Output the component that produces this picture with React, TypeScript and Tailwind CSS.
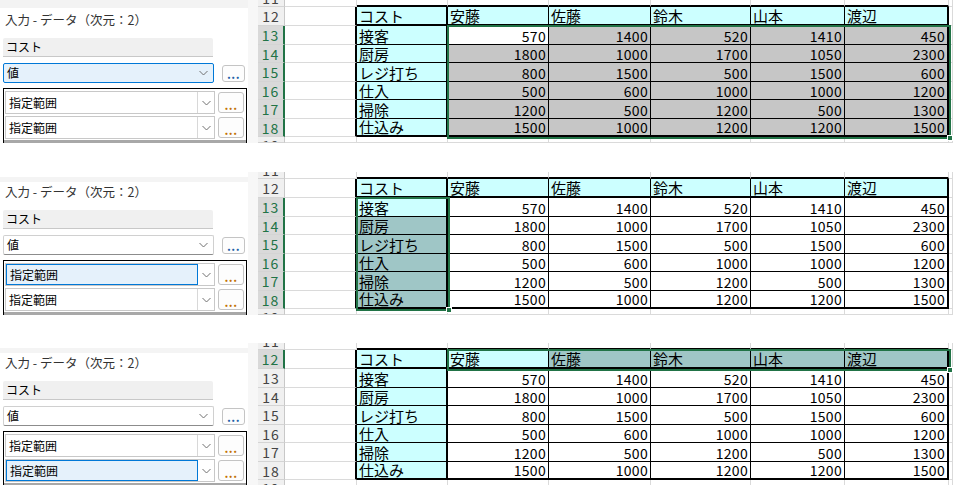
import React from "react";

const FONT = { fontFamily: '"Noto Sans CJK JP", "Noto Sans", sans-serif' };

const COLW = [72, 91, 101, 102, 100, 94, 104, 4];
const ROWS = [11, 12, 13, 14, 15, 16, 17, 18, 19];
const ROWH: Record<number, number> = { 11: 7, 12: 19, 13: 19, 14: 18, 15: 19, 16: 18, 17: 19, 18: 18, 19: 6 };

const HEADER = ["コスト", "安藤", "佐藤", "鈴木", "山本", "渡辺"];
const DATA: (string | number)[][] = [
  ["接客", 570, 1400, 520, 1410, 450],
  ["厨房", 1800, 1000, 1700, 1050, 2300],
  ["レジ打ち", 800, 1500, 500, 1500, 600],
  ["仕入", 500, 600, 1000, 1000, 1200],
  ["掃除", 1200, 500, 1200, 500, 1300],
  ["仕込み", 1500, 1000, 1200, 1200, 1500],
];

type Sel = { c0: number; c1: number; r0: number; r1: number; ac: number; ar: number };
type PanelCfg = { sel: Sel; valueFocus: boolean; boxHi: number; firstPanel: boolean };

const GRID = "#dadada";

function colLeft(c: number) {
  let x = 0;
  for (let i = 0; i < c; i++) x += COLW[i];
  return x;
}
function rowTop(r: number) {
  let y = 0;
  for (const rr of ROWS) {
    if (rr === r) break;
    y += ROWH[rr];
  }
  return y;
}

function Chevron() {
  return (
    <svg width="9" height="6" viewBox="0 0 9 6" className="shrink-0">
      <polyline points="0.5,1 4.5,5 8.5,1" fill="none" stroke="#707070" strokeWidth="1" />
    </svg>
  );
}

function DotsButton({ color, className }: { color: string; className: string }) {
  return (
    <div
      className={"flex items-end justify-center rounded-[3px] border border-[#c4c4c4] bg-[#fdfdfd] " + className}
    >
      <span className="text-[12px] leading-[14px] font-bold tracking-[0.5px]" style={{ color }}>
        ...
      </span>
    </div>
  );
}

function Dialog({ cfg }: { cfg: PanelCfg }) {
  return (
    <div className="w-[248px] h-[143px] overflow-hidden bg-white flex flex-col shrink-0" style={FONT}>
      {cfg.firstPanel ? (
        <div className="h-[10px] flex flex-col">
          <div className="h-[8px] bg-[#f3f3f3]" />
        </div>
      ) : (
        <div className="h-[10px] flex flex-col">
          <div className="h-[5px] bg-white" />
          <div className="h-[5px] bg-[#f4f4f4]" />
        </div>
      )}
      <div className="h-[20px] flex items-center pl-[5px] text-[12.5px] text-[#333]">入力 - データ（次元：2）</div>
      <div className="mt-[8px] ml-[3px] w-[210px] h-[19px] bg-[#f0f0f0] border-b border-[#c8c8c8] rounded-t-[2px] flex items-center pl-[3px] text-[12px] text-black">
        コスト
      </div>
      <div className="mt-[6px] h-[20px] flex items-center">
        <div
          className={
            "ml-[3px] w-[211px] h-[20px] flex items-center justify-between pl-[3px] pr-[5px] text-[12px] text-black rounded-[2px] " +
            (cfg.valueFocus
              ? "bg-[#e5f1fb] border border-[#0078d7]"
              : "bg-white border border-[#d0d0d0] border-b-[#8c8c8c]")
          }
        >
          <span>値</span>
          <Chevron />
        </div>
        <DotsButton color="#1f5fa8" className="ml-[8px] w-[23px] h-[17px]" />
      </div>
      <div className="mt-[5px] ml-[3px] w-[244px] flex-1 border border-black border-b-0 bg-white flex flex-col pt-[2px]">
        {[0, 1].map((i) => (
          <div key={i} className={"flex items-center h-[23px] " + (i === 1 ? "mt-[2px]" : "")}>
            <div className="ml-[1px] w-[210px] h-[23px] flex border border-[#c8c8c8] bg-white text-[12px] text-black">
              <div
                className={
                  "w-[192px] h-full flex items-center pl-[3px] " +
                  (cfg.boxHi === i ? "bg-[#e5f1fb] border border-[#0078d7]" : "border-r border-[#d8d8d8]")
                }
              >
                指定範囲
              </div>
              <div className="flex-1 flex items-center justify-center">
                <Chevron />
              </div>
            </div>
            <DotsButton color="#c27100" className="ml-[3px] w-[26px] h-[21px]" />
          </div>
        ))}
        <div className="mt-[1px] flex-1 bg-[#a8a8a8]" />
      </div>
    </div>
  );
}

function RowHeader({ cfg }: { cfg: PanelCfg }) {
  return (
    <div className="w-[27px] shrink-0 flex flex-col bg-[#f0f0f0]" style={FONT}>
      {ROWS.map((r) => {
        const sel = r >= cfg.sel.r0 && r <= cfg.sel.r1;
        const partialTop = r === 11;
        const partialBottom = r === 19;
        return (
          <div
            key={r}
            className={
              "overflow-hidden flex justify-center border-b border-[#d4d4d4] " +
              (partialTop ? "items-end " : partialBottom ? "items-start " : "items-center ") +
              (sel
                ? "bg-[#d9d9d9] text-[#217346] border-r-2 border-r-[#217346]"
                : "text-[#444] border-r border-r-[#c8c8c8]")
            }
            style={{ height: ROWH[r] }}
          >
            <span className="text-[14px] leading-[16px] tracking-[1px] shrink-0">{r}</span>
          </div>
        );
      })}
    </div>
  );
}

function Grid({ cfg }: { cfg: PanelCfg }) {
  const s = cfg.sel;
  const selLeft = colLeft(s.c0) - 1;
  const selTop = rowTop(s.r0) - 1;
  const selW = colLeft(s.c1 + 1) - colLeft(s.c0) + 1;
  const selH = rowTop(s.r1 + 1) - rowTop(s.r0) + 1;
  return (
    <div className="relative flex-1 h-[143px] overflow-hidden bg-white" style={FONT}>
      {ROWS.map((r) => (
        <div key={r} className="flex" style={{ height: ROWH[r] }}>
          {COLW.map((w, c) => {
            const inRows = r >= 12 && r <= 18;
            const inCols = c >= 1 && c <= 6;
            let right = `1px solid ${GRID}`;
            let bottom = `1px solid ${GRID}`;
            if (inRows) {
              if (c === 0 || c === 1 || c === 6) right = "2px solid #000";
              else if (c >= 2 && c <= 5) right = "1px solid #000";
            }
            if (inCols) {
              if (r === 11 || r === 12 || r === 18) bottom = "2px solid #000";
              else if (r >= 13 && r <= 17) bottom = "1px solid #000";
            }
            const cyan = inRows && inCols && (r === 12 || c === 1);
            const selected = c >= s.c0 && c <= s.c1 && r >= s.r0 && r <= s.r1;
            const active = c === s.ac && r === s.ar;
            let bg = cyan ? "#ccffff" : "#ffffff";
            if (selected && !active) bg = cyan ? "#9fc6c6" : "#c6c6c6";
            let content: React.ReactNode = null;
            let isNum = false;
            if (inRows && inCols) {
              const v = r === 12 ? HEADER[c - 1] : DATA[r - 13][c - 1];
              isNum = typeof v === "number";
              content = v;
            }
            return (
              <div
                key={c}
                className={
                  "shrink-0 flex items-end overflow-hidden text-black whitespace-nowrap " +
                  (isNum ? "justify-end pr-[2px] text-[14px] leading-[16px] tracking-[0.3px]" : "justify-start pl-[2px] text-[15px] leading-[16px]")
                }
                style={{ width: w, borderRight: right, borderBottom: bottom, background: bg }}
              >
                {content}
              </div>
            );
          })}
        </div>
      ))}
      <div
        className="absolute border-2 border-[#217346] pointer-events-none"
        style={{ left: selLeft, top: selTop, width: selW + 2, height: selH + 2 }}
      />
      <div
        className="absolute w-[6px] h-[6px] bg-[#217346] border border-white pointer-events-none"
        style={{ left: selLeft + selW - 2, top: selTop + selH - 2 }}
      />
    </div>
  );
}

function Panel({ cfg }: { cfg: PanelCfg }) {
  return (
    <div className="flex h-[143px] w-[953px]">
      <Dialog cfg={cfg} />
      <div className="w-[10px] shrink-0 bg-[#f7f7f7]" />
      <RowHeader cfg={cfg} />
      <Grid cfg={cfg} />
    </div>
  );
}

const PANELS: PanelCfg[] = [
  { sel: { c0: 2, c1: 6, r0: 13, r1: 18, ac: 2, ar: 13 }, valueFocus: true, boxHi: -1, firstPanel: true },
  { sel: { c0: 1, c1: 1, r0: 13, r1: 18, ac: 1, ar: 13 }, valueFocus: false, boxHi: 0, firstPanel: false },
  { sel: { c0: 2, c1: 6, r0: 12, r1: 12, ac: 2, ar: 12 }, valueFocus: false, boxHi: 1, firstPanel: false },
];

export default function App() {
  return (
    <div className="w-[953px] h-[485px] bg-white overflow-hidden flex flex-col">
      <Panel cfg={PANELS[0]} />
      <div className="h-[29px] shrink-0 bg-white" />
      <Panel cfg={PANELS[1]} />
      <div className="h-[28px] shrink-0 bg-white" />
      <Panel cfg={PANELS[2]} />
    </div>
  );
}
